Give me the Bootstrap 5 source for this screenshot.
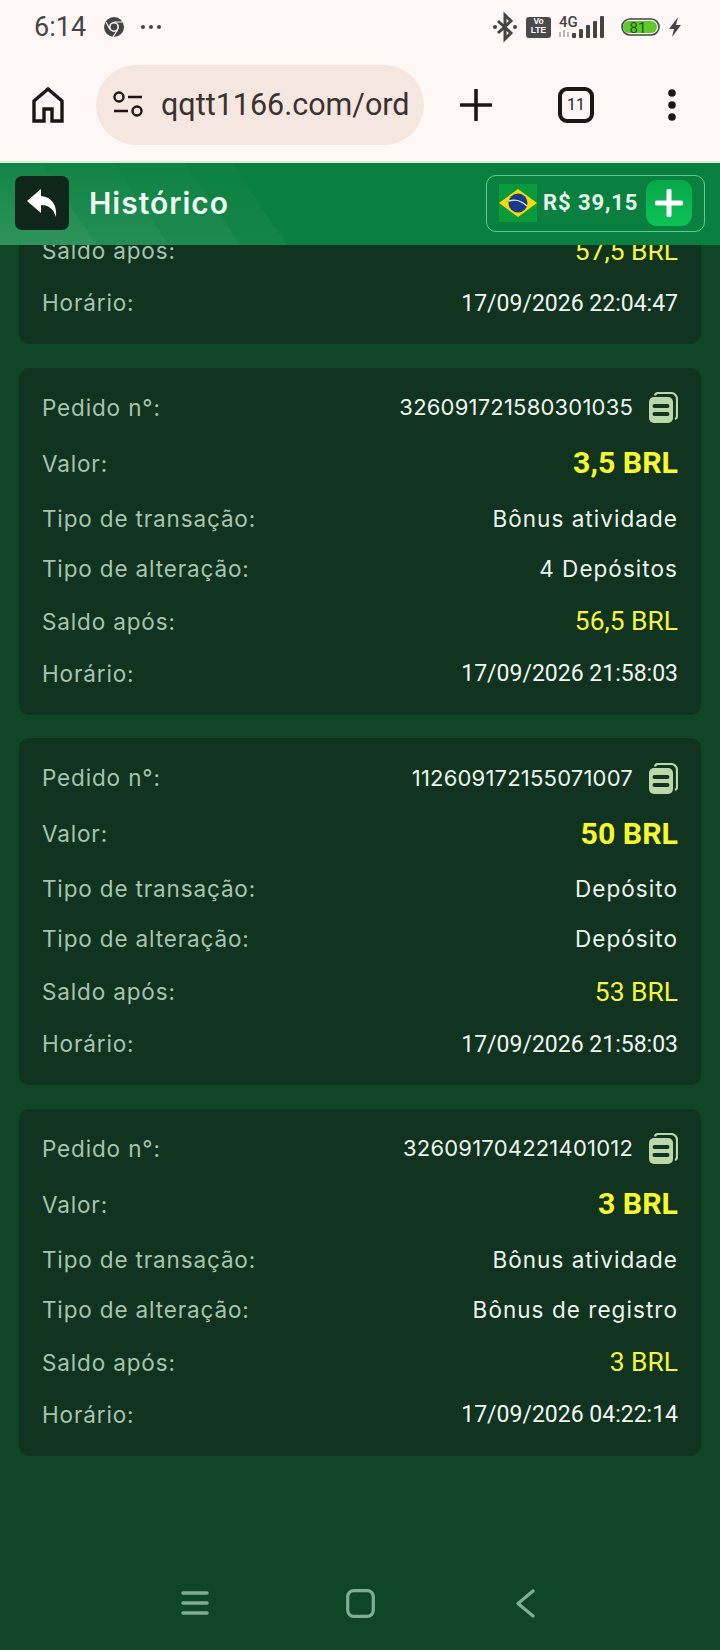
<!DOCTYPE html>
<html lang="pt-BR">
<head>
    <meta charset="UTF-8" />
    <meta name="viewport" content="width=device-width, initial-scale=1" />
    <title>Histórico</title>
    <link href="https://cdn.jsdelivr.net/npm/bootstrap@5.3.0/dist/css/bootstrap.min.css" rel="stylesheet" />
    <style>
        html, body { height: 1650px; overflow: hidden; }
        body { background: #0f4726; font-family: "Inter", "Liberation Sans", sans-serif; }

        /* navegador */
        .chrome-top { height: 163px; background: #fff7f5; border-bottom: 2px solid #dcebd9; color: #221c1a; }
        .status-row { height: 54px; padding: 0 38px 0 34px; color: #444; }
        .status-time { font: 400 27px/1 "Roboto", sans-serif; width: 70px; }
        .status-right { margin-left: auto; }
        .status-right svg { overflow: visible; }
        .volte-chip { width: 25px; height: 21px; margin-left: 8px; background: #4a4a4a; border-radius: 3px; color: #fff; font: 700 8.5px/9px "Liberation Sans", sans-serif; text-align: center; }
        .addr-row { height: 80px; margin-top: 11px; padding-left: 32px; }
        .addr-home { width: 32px; margin-right: 32px; }
        .addr-pill { width: 328px; height: 80px; background: #f5e6df; border-radius: 40px; padding-left: 17px; gap: 18px; overflow: hidden; }
        .addr-text { font: 400 30.5px/1 "Roboto", sans-serif; color: #3a3230; white-space: nowrap; }
        .addr-plus { margin-left: 36px; }
        .addr-tabs { width: 36px; height: 36px; margin-left: 66px; border: 4px solid #1c1715; border-radius: 9px; font: 400 16px/1 "Roboto", sans-serif; }
        .addr-menu { margin-left: 72px; }

        /* cabecalho */
        .feed { height: 1487px; overflow: hidden; }
        .app-head {
            height: 82px; padding: 0 15px 2px; z-index: 2;
            background:
                linear-gradient(to top, rgba(10,128,64,0) 0%, rgba(10,128,64,.75) 100%),
                linear-gradient(56deg, rgba(255,255,255,.15) 0 80px, rgba(255,255,255,.11) 80px 140px, rgba(255,255,255,.08) 140px 199px, rgba(255,255,255,.04) 199px 238px, rgba(255,255,255,0) 238px),
                #0a8040;
        }
        .back-btn { width: 54px; height: 54px; background: #10261a; border-radius: 7px; }
        .head-title { font-size: 30px; font-weight: 600; letter-spacing: 1px; color: #eefbf3; margin: 0 0 0 20px; line-height: 1; }
        .wallet { width: 219px; height: 57px; margin-left: auto; border: 1px solid #5fca90; border-radius: 10px; padding: 0 12px; }
        .wallet-amount { font: 700 22px/1 "Roboto", sans-serif; letter-spacing: .9px; color: #e4f6ea; margin-left: 6px; white-space: nowrap; }
        .wallet-add { width: 46px; height: 46px; margin-left: auto; border-radius: 11px; background: linear-gradient(180deg, #06a84a, #0cc355); }

        /* lista */
        .order-list { padding: 0 19px; gap: 23.5px; }
        .order-box { background: #103420; border-radius: 10px; padding: 14px 23px 17px; display: grid; grid-template-rows: 52px 60px 50px 50px 56px 48px; }
        .order-box.cut { margin-top: -22px; padding-top: 0; grid-template-rows: 56px 48px; }
        .lbl { font-size: 22.5px; letter-spacing: .85px; color: #a6c4ae; white-space: nowrap; }
        .val { font-size: 22.5px; letter-spacing: 1.05px; color: #eef5ef; white-space: nowrap; }
        .val-id { font-size: 22px; letter-spacing: .2px; }
        .val-date { font: 400 23px/1 "Roboto", sans-serif; color: #f2f7f2; }
        .val-big { font: 700 30.3px/1 "Roboto", sans-serif; color: #f8f82e; }
        .val-mid { font: 400 26.4px/1 "Roboto", sans-serif; color: #f6f63c; }

        /* barra do sistema */
        .sys-nav { height: 94px; display: grid; grid-template-columns: repeat(3, 165px); justify-content: center; justify-items: center; align-items: center; margin-top: auto; }
    </style>
</head>
<body>

    <div class="chrome-top">
        <div class="status-row d-flex align-items-center">
            <span class="status-time">6:14</span>
            <svg width="20" height="20" viewBox="0 0 20 20"><circle cx="10" cy="10" r="10" fill="#444"/><circle cx="10" cy="10" r="5" fill="#fff7f5"/><circle cx="10" cy="10" r="3.4" fill="#444"/><path d="M10 5H19M6 12.5L2 5M13.5 13L9 20" stroke="#fff7f5" stroke-width="1.2"/></svg>
            <svg class="ms-3" width="22" height="6" viewBox="0 0 22 6"><circle cx="3" cy="3" r="2" fill="#444"/><circle cx="11" cy="3" r="2" fill="#444"/><circle cx="19" cy="3" r="2" fill="#444"/></svg>
            <div class="status-right d-flex align-items-center">
                <svg width="26" height="28" viewBox="0 0 26 28"><path d="M6 8L19 20L13 26V2L19 8L6 20" fill="none" stroke="#444" stroke-width="3"/><circle cx="3" cy="14" r="2" fill="#444"/><circle cx="23" cy="14" r="2" fill="#444"/></svg>
                <div class="volte-chip">Vo<br>LTE</div>
                <svg class="ms-2" width="46" height="24" viewBox="0 0 46 24"><text x="0" y="12" font-family="Roboto" font-weight="500" font-size="15" fill="#444">4G</text><path d="M1 17v5M5 15v7M9 17v5" stroke="#aaa" stroke-width="1.6"/><rect x="13" y="18" width="4" height="5" rx="1" fill="#444"/><rect x="20" y="14" width="4" height="9" rx="1" fill="#444"/><rect x="27" y="10" width="4" height="13" rx="1" fill="#444"/><rect x="34" y="6" width="4" height="17" rx="1" fill="#444"/><rect x="41" y="1" width="4" height="22" rx="1" fill="#444"/></svg>
                <svg class="ms-3" width="39" height="18" viewBox="0 0 39 18"><rect x="1" y="1" width="37" height="16" rx="8" fill="none" stroke="#444" stroke-width="1.6"/><path d="M8 3H30A6 6 0 0 1 30 15H8A6 6 0 0 1 8 3Z" fill="#5dc92c"/><text x="17" y="15" text-anchor="middle" font-family="Roboto" font-size="15" fill="#23571a">81</text></svg>
                <svg class="ms-2" width="14" height="20" viewBox="0 0 14 20"><path d="M10 0L1 12H6L4 20L13 8H8Z" fill="#444"/></svg>
            </div>
        </div>
        <div class="addr-row d-flex align-items-center">
            <svg class="addr-home" height="36" viewBox="0 0 32 36"><path d="M2 34V14L16 2L30 14V34H20V22H12V34Z" fill="none" stroke="#1c1715" stroke-width="3.4" stroke-linejoin="miter"/></svg>
            <div class="addr-pill d-flex align-items-center">
                <svg width="30" height="28" viewBox="0 0 30 28" class="flex-shrink-0"><circle cx="6" cy="6" r="4.5" fill="none" stroke="#1c1715" stroke-width="2.4"/><path d="M15 6H29M1 20H15" stroke="#1c1715" stroke-width="2.6"/><circle cx="24" cy="20" r="4.5" fill="none" stroke="#1c1715" stroke-width="2.4"/></svg>
                <span class="addr-text">qqtt1166.com/ord</span>
            </div>
            <svg class="addr-plus" width="32" height="32" viewBox="0 0 32 32"><path d="M16 1V31M1 16H31" stroke="#1c1715" stroke-width="3.6" stroke-linecap="round"/></svg>
            <div class="addr-tabs d-flex align-items-center justify-content-center">11</div>
            <svg class="addr-menu" width="12" height="32" viewBox="0 0 12 32"><circle cx="6" cy="4" r="3.8" fill="#1c1715"/><circle cx="6" cy="16" r="3.8" fill="#1c1715"/><circle cx="6" cy="28" r="3.8" fill="#1c1715"/></svg>
        </div>
    </div>

    <div class="feed d-flex flex-column">
        <header class="app-head d-flex align-items-center position-relative flex-shrink-0">
            <div class="back-btn d-flex align-items-center justify-content-center">
                <svg width="32" height="30" viewBox="0 0 32 30"><path d="M15 1L1 13L15 25V17C22 17 27 20 30 29C31 17 26 9 15 8Z" fill="#fff"/></svg>
            </div>
            <h1 class="head-title">Histórico</h1>
            <div class="wallet d-flex align-items-center">
                <svg width="38" height="38" viewBox="0 0 38 38" class="flex-shrink-0"><rect width="38" height="38" fill="#0a9a3c"/><path d="M19 5L38 19L19 33L0 19Z" fill="#f5d90a"/><circle cx="19" cy="19" r="9.5" fill="#1a3a8a"/><path d="M10 17C16 15 23 17 28 22" fill="none" stroke="#e8eef5" stroke-width="1.4"/></svg>
                <span class="wallet-amount">R$ 39,15</span>
                <div class="wallet-add d-flex align-items-center justify-content-center">
                    <svg width="28" height="28" viewBox="0 0 28 28"><path d="M14 2V26M2 14H26" stroke="#fff" stroke-width="5" stroke-linecap="round"/></svg>
                </div>
            </div>
        </header>

        <div class="order-list d-flex flex-column">
            <div class="order-box cut">
                <div class="d-flex justify-content-between align-items-center"><span class="lbl">Saldo após:</span><span class="val-mid">57,5 BRL</span></div>
                <div class="d-flex justify-content-between align-items-center"><span class="lbl">Horário:</span><span class="val-date">17/09/2026 22:04:47</span></div>
            </div>

            <div class="order-box">
                <div class="d-flex justify-content-between align-items-center"><span class="lbl">Pedido n°:</span><span class="d-flex align-items-center gap-3"><span class="val val-id">326091721580301035</span><svg width="29" height="31" viewBox="0 0 29 31"><path d="M6 3.5A3 3 0 0 1 9 1H22A6 6 0 0 1 28 7V24A3 3 0 0 1 26 27" fill="none" stroke="#bcd8a8" stroke-width="2.2"/><rect y="5" width="24" height="26" rx="5" fill="#bcd8a8"/><path d="M5.5 14H18.5M5.5 22H18.5" stroke="#103420" stroke-width="4" stroke-linecap="round"/></svg></span></div>
                <div class="d-flex justify-content-between align-items-center"><span class="lbl">Valor:</span><span class="val-big">3,5 BRL</span></div>
                <div class="d-flex justify-content-between align-items-center"><span class="lbl">Tipo de transação:</span><span class="val">Bônus atividade</span></div>
                <div class="d-flex justify-content-between align-items-center"><span class="lbl">Tipo de alteração:</span><span class="val">4 Depósitos</span></div>
                <div class="d-flex justify-content-between align-items-center"><span class="lbl">Saldo após:</span><span class="val-mid">56,5 BRL</span></div>
                <div class="d-flex justify-content-between align-items-center"><span class="lbl">Horário:</span><span class="val-date">17/09/2026 21:58:03</span></div>
            </div>

            <div class="order-box">
                <div class="d-flex justify-content-between align-items-center"><span class="lbl">Pedido n°:</span><span class="d-flex align-items-center gap-3"><span class="val val-id">112609172155071007</span><svg width="29" height="31" viewBox="0 0 29 31"><path d="M6 3.5A3 3 0 0 1 9 1H22A6 6 0 0 1 28 7V24A3 3 0 0 1 26 27" fill="none" stroke="#bcd8a8" stroke-width="2.2"/><rect y="5" width="24" height="26" rx="5" fill="#bcd8a8"/><path d="M5.5 14H18.5M5.5 22H18.5" stroke="#103420" stroke-width="4" stroke-linecap="round"/></svg></span></div>
                <div class="d-flex justify-content-between align-items-center"><span class="lbl">Valor:</span><span class="val-big">50 BRL</span></div>
                <div class="d-flex justify-content-between align-items-center"><span class="lbl">Tipo de transação:</span><span class="val">Depósito</span></div>
                <div class="d-flex justify-content-between align-items-center"><span class="lbl">Tipo de alteração:</span><span class="val">Depósito</span></div>
                <div class="d-flex justify-content-between align-items-center"><span class="lbl">Saldo após:</span><span class="val-mid">53 BRL</span></div>
                <div class="d-flex justify-content-between align-items-center"><span class="lbl">Horário:</span><span class="val-date">17/09/2026 21:58:03</span></div>
            </div>

            <div class="order-box">
                <div class="d-flex justify-content-between align-items-center"><span class="lbl">Pedido n°:</span><span class="d-flex align-items-center gap-3"><span class="val val-id">326091704221401012</span><svg width="29" height="31" viewBox="0 0 29 31"><path d="M6 3.5A3 3 0 0 1 9 1H22A6 6 0 0 1 28 7V24A3 3 0 0 1 26 27" fill="none" stroke="#bcd8a8" stroke-width="2.2"/><rect y="5" width="24" height="26" rx="5" fill="#bcd8a8"/><path d="M5.5 14H18.5M5.5 22H18.5" stroke="#103420" stroke-width="4" stroke-linecap="round"/></svg></span></div>
                <div class="d-flex justify-content-between align-items-center"><span class="lbl">Valor:</span><span class="val-big">3 BRL</span></div>
                <div class="d-flex justify-content-between align-items-center"><span class="lbl">Tipo de transação:</span><span class="val">Bônus atividade</span></div>
                <div class="d-flex justify-content-between align-items-center"><span class="lbl">Tipo de alteração:</span><span class="val">Bônus de registro</span></div>
                <div class="d-flex justify-content-between align-items-center"><span class="lbl">Saldo após:</span><span class="val-mid">3 BRL</span></div>
                <div class="d-flex justify-content-between align-items-center"><span class="lbl">Horário:</span><span class="val-date">17/09/2026 04:22:14</span></div>
            </div>
        </div>

        <nav class="sys-nav">
            <svg width="28" height="26" viewBox="0 0 28 26"><path d="M2 3H26M2 13H26M2 23H26" stroke="#7fae94" stroke-width="3.4" stroke-linecap="round"/></svg>
            <svg width="29" height="29" viewBox="0 0 29 29"><rect x="1.7" y="1.7" width="25.6" height="25.6" rx="6" fill="none" stroke="#7fae94" stroke-width="3.2"/></svg>
            <svg width="19" height="29" viewBox="0 0 19 29"><path d="M17 2L2 14.5L17 27" fill="none" stroke="#7fae94" stroke-width="3.2" stroke-linecap="round" stroke-linejoin="round"/></svg>
        </nav>
    </div>

    <script src="https://cdn.jsdelivr.net/npm/bootstrap@5.3.0/dist/js/bootstrap.bundle.min.js"></script>
</body>
</html>
